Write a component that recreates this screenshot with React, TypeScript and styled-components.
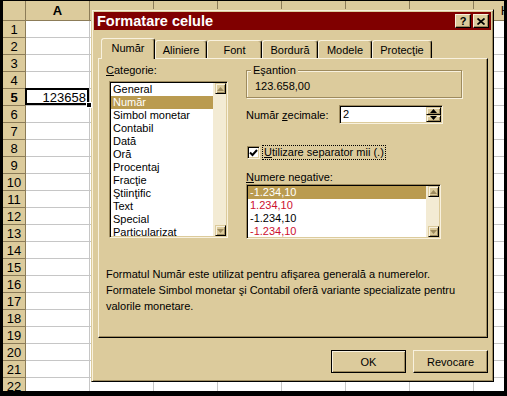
import { Fragment } from "react";
import styled, { createGlobalStyle } from "styled-components";

// Win98 "maple"-like colours
const C = {
  face: "#dccb9c",
  light: "#f8f1de",
  shadow: "#9e8b5e",
  dark: "#000",
  select: "#ba9b50",
  title: "#800000",
  grid: "#c6c6c6",
  head: "#8c7c58",
  track: "#f3ebd4",
  red: "#cc1030",
};

const GlobalStyle = createGlobalStyle`
  html, body {
    margin: 0;
    padding: 0;
    background: #000;
  }
  * {
    box-sizing: border-box;
  }
`;

const Screen = styled.div`
  position: relative;
  width: 507px;
  height: 396px;
  overflow: hidden;
  background: #000;
  padding: 1px 3px 5px 3px;
`;

// ---------- spreadsheet behind the dialog ----------
const Sheet = styled.div`
  width: 501px;
  height: 390px;
  overflow: hidden;
  background: #fff;
  display: grid;
  grid-template-columns: 23px repeat(8, 64px);
  grid-template-rows: 20px repeat(22, 17px);
  font-family: "Liberation Sans", Arial, sans-serif;
  font-size: 13px;
  color: #000;
`;

const HeadCell = styled.div<{ $bold?: boolean }>`
  background: ${C.face};
  border-right: 1px solid ${C.head};
  border-bottom: 1px solid ${C.head};
  display: flex;
  align-items: center;
  justify-content: center;
  font-weight: ${(p) => (p.$bold ? "bold" : "normal")};
`;

const Cell = styled.div<{ $active?: boolean }>`
  position: relative;
  border-right: 1px solid ${C.grid};
  border-bottom: 1px solid ${C.grid};
  display: flex;
  align-items: center;
  justify-content: flex-end;
  padding-right: 3px;

  ${(p) =>
    p.$active &&
    `
    &::after {
      content: "";
      position: absolute;
      inset: -1px 0 0 -1px;
      border: 2px solid #000;
    }
  `}
`;

const FillHandle = styled.span`
  position: absolute;
  right: -3px;
  bottom: -3px;
  width: 6px;
  height: 6px;
  background: #000;
  border: 1px solid #fff;
  z-index: 1;
`;

// ---------- dialog ----------
const Dialog = styled.div`
  position: absolute;
  left: 91px;
  top: 9px;
  width: 403px;
  height: 373px;
  background: ${C.face};
  border: 1px solid;
  border-color: ${C.face} ${C.dark} ${C.dark} ${C.face};
  box-shadow: inset 1px 1px 0 ${C.light}, inset -1px -1px 0 ${C.shadow};
  padding: 2px;
  display: flex;
  flex-direction: column;
  font-family: "Liberation Sans", Arial, sans-serif;
  font-size: 11px;
  color: #000;
`;

const TitleBar = styled.div`
  height: 18px;
  background: ${C.title};
  display: flex;
  align-items: center;
  padding: 0 2px 0 3px;
  color: #fff;
  font-weight: bold;
  font-size: 14.5px;
`;

const TitleText = styled.span`
  flex: 1;
`;

const TitleBtn = styled.div`
  width: 16px;
  height: 14px;
  margin-left: 2px;
  background: ${C.face};
  border: 1px solid;
  border-color: ${C.light} ${C.dark} ${C.dark} ${C.light};
  box-shadow: inset -1px -1px 0 ${C.shadow};
  display: flex;
  align-items: center;
  justify-content: center;
  color: #000;
  font-size: 11px;
  font-weight: bold;
  line-height: 1;
`;

const Body = styled.div`
  flex: 1;
  display: flex;
  flex-direction: column;
  padding: 8px 3px 0 4px;
`;

const Tabs = styled.div`
  display: flex;
  align-items: flex-start;
  height: 20px;
  padding-left: 3px;
`;

const Tab = styled.div<{ $w: number; $active?: boolean }>`
  position: relative;
  z-index: ${(p) => (p.$active ? 2 : 1)};
  width: ${(p) => p.$w}px;
  height: ${(p) => (p.$active ? 21 : 18)}px;
  margin-top: ${(p) => (p.$active ? 0 : 2)}px;
  background: ${C.face};
  border: 1px solid;
  border-bottom: none;
  border-color: ${C.light} ${C.dark} transparent ${C.light};
  border-radius: 3px 3px 0 0;
  box-shadow: inset -1px 0 0 ${C.shadow};
  display: flex;
  align-items: center;
  justify-content: center;
  padding-bottom: ${(p) => (p.$active ? 2 : 0)}px;
`;

const Panel = styled.div`
  height: 280px;
  border: 1px solid;
  border-color: ${C.light} ${C.dark} ${C.dark} ${C.light};
  box-shadow: inset -1px -1px 0 ${C.shadow};
  padding: 4px 25px 0 7px;
  display: flex;
  flex-direction: column;
`;

const Columns = styled.div`
  display: flex;
`;

const LeftCol = styled.div`
  width: 140px;
  display: flex;
  flex-direction: column;
`;

const RightCol = styled.div`
  flex: 1;
  display: flex;
  flex-direction: column;
`;

const Label = styled.div<{ $mt?: number }>`
  line-height: 14px;
  height: 14px;
  margin-top: ${(p) => p.$mt ?? 0}px;
  white-space: nowrap;
`;

const U = styled.span`
  text-decoration: underline;
`;

const ListBox = styled.div<{ $w: number; $h: number; $mt: number; $ml?: number }>`
  width: ${(p) => p.$w}px;
  height: ${(p) => p.$h}px;
  margin-top: ${(p) => p.$mt}px;
  margin-left: ${(p) => p.$ml ?? 0}px;
  background: #fff;
  border: 1px solid;
  border-color: ${C.shadow} ${C.light} ${C.light} ${C.shadow};
  box-shadow: inset 1px 1px 0 ${C.dark}, inset -1px -1px 0 ${C.face};
  padding: 1px;
  display: flex;
  overflow: hidden;
`;

const Items = styled.div`
  flex: 1;
  overflow: hidden;
`;

const Item = styled.div<{ $sel?: boolean; $red?: boolean }>`
  height: 13px;
  line-height: 13px;
  padding-left: 2px;
  white-space: nowrap;
  background: ${(p) => (p.$sel ? C.select : "transparent")};
  color: ${(p) => (p.$sel ? "#fff" : p.$red ? C.red : "#000")};
`;

const ScrollBar = styled.div<{ $w: number }>`
  width: ${(p) => p.$w}px;
  flex: none;
  background: ${C.track};
  display: flex;
  flex-direction: column;
  justify-content: space-between;
  align-items: flex-end;
`;

const ScrollBtn = styled.div`
  width: 11px;
  height: 11px;
  background: ${C.face};
  border: 1px solid;
  border-color: ${C.face} ${C.dark} ${C.dark} ${C.face};
  box-shadow: inset 1px 1px 0 ${C.light}, inset -1px -1px 0 ${C.shadow};
  display: flex;
  align-items: center;
  justify-content: center;
`;

const Group = styled.div`
  position: relative;
  margin-top: 7px;
  height: 28px;
  border: 1px solid ${C.shadow};
  box-shadow: inset 1px 1px 0 ${C.light}, 1px 1px 0 ${C.light};
  padding: 9px 0 0 8px;
`;

const GroupTitle = styled.span`
  position: absolute;
  left: 4px;
  top: -7px;
  padding: 0 2px;
  background: ${C.face};
  line-height: 13px;
`;

const FieldRow = styled.div<{ $mt: number }>`
  display: flex;
  align-items: center;
  margin-top: ${(p) => p.$mt}px;
`;

const FieldLabel = styled.span`
  width: 93px;
`;

const SpinBox = styled.div`
  width: 104px;
  height: 19px;
  background: #fff;
  border: 1px solid;
  border-color: ${C.shadow} ${C.light} ${C.light} ${C.shadow};
  box-shadow: inset 1px 1px 0 ${C.dark}, inset -1px -1px 0 ${C.face};
  padding: 1px;
  display: flex;
`;

const SpinValue = styled.div`
  flex: 1;
  padding-left: 2px;
  line-height: 15px;
`;

const SpinBtns = styled.div`
  width: 15px;
  display: flex;
  flex-direction: column;
`;

const SpinBtn = styled.div`
  flex: 1;
  background: ${C.face};
  border: 1px solid;
  border-color: ${C.face} ${C.dark} ${C.dark} ${C.face};
  box-shadow: inset 1px 1px 0 ${C.light}, inset -1px -1px 0 ${C.shadow};
  display: flex;
  align-items: center;
  justify-content: center;
`;

const Check = styled.div`
  width: 13px;
  height: 13px;
  margin-left: 1px;
  background: #fff;
  border: 1px solid;
  border-color: ${C.shadow} ${C.light} ${C.light} ${C.shadow};
  box-shadow: inset 1px 1px 0 ${C.dark}, inset -1px -1px 0 ${C.face};
  display: flex;
  align-items: center;
  justify-content: center;
`;

const FocusLabel = styled.span`
  margin-left: 2px;
  padding: 0 1px;
  line-height: 13px;
  border: 1px dotted #000;
`;

const Desc = styled.p`
  margin: 27px 0 0 0;
  line-height: 16px;
`;

const Buttons = styled.div`
  display: flex;
  justify-content: flex-end;
  gap: 7px;
  margin-top: 12px;
`;

const Button = styled.div<{ $default?: boolean }>`
  width: 75px;
  height: 23px;
  background: ${C.face};
  border: 1px solid;
  border-color: ${(p) =>
    p.$default
      ? `${C.dark}`
      : `${C.light} ${C.dark} ${C.dark} ${C.light}`};
  box-shadow: ${(p) =>
    p.$default
      ? `inset 1px 1px 0 ${C.light}, inset -1px -1px 0 ${C.shadow}`
      : `inset -1px -1px 0 ${C.shadow}`};
  display: flex;
  align-items: center;
  justify-content: center;
`;

const Arrow = ({ down, color }: { down?: boolean; color: string }) => (
  <svg width="7" height="4" viewBox="0 0 7 4">
    <path d={down ? "M0 0h7L3.5 4z" : "M3.5 0L7 4H0z"} fill={color} />
  </svg>
);

const CATEGORIES = [
  "General",
  "Număr",
  "Simbol monetar",
  "Contabil",
  "Dată",
  "Oră",
  "Procentaj",
  "Fracţie",
  "Ştiinţific",
  "Text",
  "Special",
  "Particularizat",
];

const NEGATIVES = [
  { text: "-1.234,10", red: false },
  { text: "1.234,10", red: true },
  { text: "-1.234,10", red: false },
  { text: "-1.234,10", red: true },
];

const TABS = [
  { label: "Număr", w: 54 },
  { label: "Aliniere", w: 52 },
  { label: "Font", w: 55 },
  { label: "Bordură", w: 56 },
  { label: "Modele", w: 54 },
  { label: "Protecţie", w: 60 },
];

// only A and H headers are visible; the dialog hides the rest
const COLS = ["A", "", "", "", "", "", "", "H"];
const ROWS = Array.from({ length: 22 }, (_, i) => i + 1);

export default function App() {
  return (
    <>
      <GlobalStyle />
      <Screen>
        <Sheet>
          <HeadCell />
          {COLS.map((c, i) => (
            <HeadCell key={i} $bold={c === "A"}>
              {c}
            </HeadCell>
          ))}
          {ROWS.map((r) => (
            <Fragment key={r}>
              <HeadCell $bold={r === 5}>{r}</HeadCell>
              {COLS.map((c, i) =>
                r === 5 && c === "A" ? (
                  <Cell key={i} $active>
                    123658
                    <FillHandle />
                  </Cell>
                ) : (
                  <Cell key={i} />
                )
              )}
            </Fragment>
          ))}
        </Sheet>

        <Dialog>
          <TitleBar>
            <TitleText>Formatare celule</TitleText>
            <TitleBtn>?</TitleBtn>
            <TitleBtn>
              <svg width="8" height="7" viewBox="0 0 8 7">
                <path d="M0.5 0.5L7.5 6.5M7.5 0.5L0.5 6.5" stroke="#000" strokeWidth="1.7" />
              </svg>
            </TitleBtn>
          </TitleBar>

          <Body>
            <Tabs>
              {TABS.map((t, i) => (
                <Tab key={t.label} $w={t.w} $active={i === 0}>
                  {t.label}
                </Tab>
              ))}
            </Tabs>

            <Panel>
              <Columns>
                <LeftCol>
                  <Label>
                    <U>C</U>ategorie:
                  </Label>
                  <ListBox $w={119} $h={157} $mt={4} $ml={3}>
                    <Items>
                      {CATEGORIES.map((c, i) => (
                        <Item key={c} $sel={i === 1}>
                          {c}
                        </Item>
                      ))}
                    </Items>
                    <ScrollBar $w={13}>
                      <ScrollBtn>
                        <Arrow color={C.shadow} />
                      </ScrollBtn>
                      <ScrollBtn>
                        <Arrow down color={C.shadow} />
                      </ScrollBtn>
                    </ScrollBar>
                  </ListBox>
                </LeftCol>

                <RightCol>
                  <Group>
                    <GroupTitle>Eşantion</GroupTitle>
                    123.658,00
                  </Group>

                  <FieldRow $mt={7}>
                    <FieldLabel>
                      Număr <U>z</U>ecimale:
                    </FieldLabel>
                    <SpinBox>
                      <SpinValue>2</SpinValue>
                      <SpinBtns>
                        <SpinBtn>
                          <Arrow color="#000" />
                        </SpinBtn>
                        <SpinBtn>
                          <Arrow down color="#000" />
                        </SpinBtn>
                      </SpinBtns>
                    </SpinBox>
                  </FieldRow>

                  <FieldRow $mt={21}>
                    <Check>
                      <svg width="9" height="8" viewBox="0 0 9 8">
                        <polyline points="1,3.5 3.5,6 8,1" fill="none" stroke="#000" strokeWidth="2" />
                      </svg>
                    </Check>
                    <FocusLabel>
                      <U>U</U>tilizare separator mii (.)
                    </FocusLabel>
                  </FieldRow>

                  <Label $mt={10}>
                    <U>N</U>umere negative:
                  </Label>
                  <ListBox $w={195} $h={55} $mt={0}>
                    <Items>
                      {NEGATIVES.map((n, i) => (
                        <Item key={i} $sel={i === 0} $red={n.red}>
                          {n.text}
                        </Item>
                      ))}
                    </Items>
                    <ScrollBar $w={13}>
                      <ScrollBtn>
                        <Arrow color={C.shadow} />
                      </ScrollBtn>
                      <ScrollBtn>
                        <Arrow down color={C.shadow} />
                      </ScrollBtn>
                    </ScrollBar>
                  </ListBox>
                </RightCol>
              </Columns>

              <Desc>
                Formatul Număr este utilizat pentru afişarea generală a numerelor.
                <br />
                Formatele Simbol monetar şi Contabil oferă variante specializate pentru
                <br />
                valorile monetare.
              </Desc>
            </Panel>

            <Buttons>
              <Button $default>OK</Button>
              <Button>Revocare</Button>
            </Buttons>
          </Body>
        </Dialog>
      </Screen>
    </>
  );
}
